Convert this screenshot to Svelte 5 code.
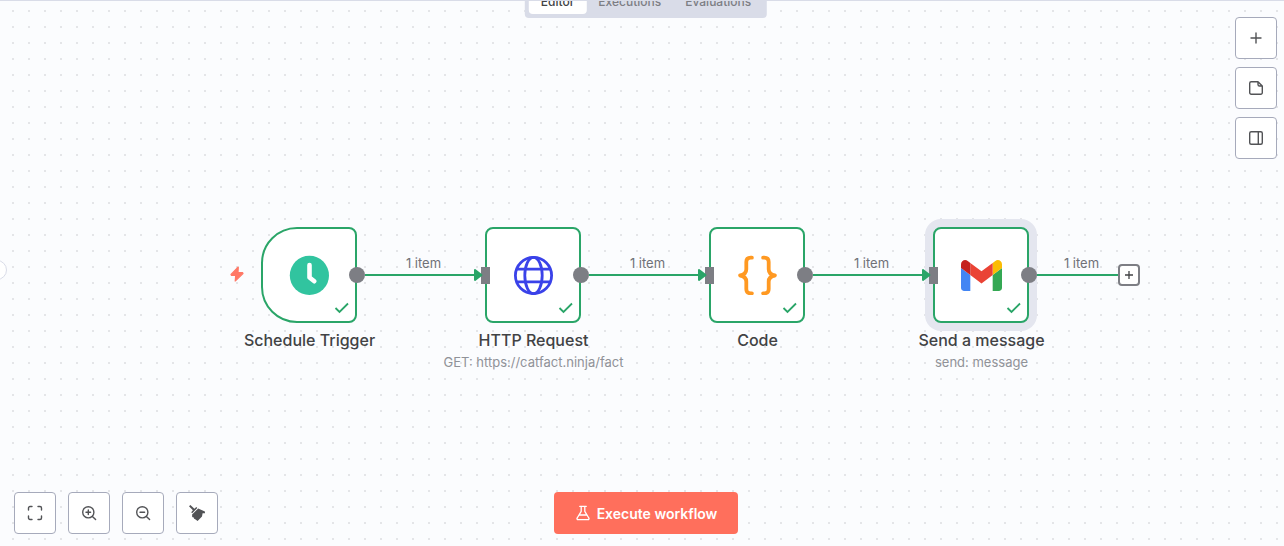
<script>
  const nodes = [
    { id: 'schedule', name: 'Schedule Trigger', x: 261, y: 227, trigger: true },
    { id: 'http', name: 'HTTP Request', sub: 'GET: https://catfact.ninja/fact', x: 485, y: 227 },
    { id: 'code', name: 'Code', x: 709, y: 227 },
    { id: 'gmail', name: 'Send a message', sub: 'send: message', x: 933, y: 227, selected: true }
  ];
  const edges = [
    { x: 365, width: 117, arrow: true },
    { x: 589, width: 117, arrow: true },
    { x: 813, width: 117, arrow: true },
    { x: 1037, width: 89, arrow: false }
  ];
  const tabs = ['Editor', 'Executions', 'Evaluations'];
  let active = $state('Editor');
</script>

<main class="workflow">
  <nav class="tabs" aria-label="Workflow views">
    {#each tabs as tab}
      <button class="tab" class:active={active === tab} onclick={() => (active = tab)}>{tab}</button>
    {/each}
  </nav>

  <button class="panel-toggle" aria-label="Toggle sidebar"></button>

  <section class="canvas" aria-label="Workflow canvas">
    {#each nodes as node}
      <article class="node" style:left="{node.x}px" style:top="{node.y}px">
        <div class="box" class:trigger={node.trigger} class:selected={node.selected}>
          {#if node.id === 'schedule'}
            <svg width="40" height="40" viewBox="0 0 40 40" aria-hidden="true">
              <circle cx="20.400" cy="20.400" r="19.600" fill="#31c49f" />
              <path d="M20.500 10V22.500l4.800 3.700" fill="none" stroke="#fff" stroke-width="4.600" stroke-linecap="round" stroke-linejoin="round" />
            </svg>
          {:else if node.id === 'http'}
            <svg width="40" height="40" viewBox="0 0 40 40" fill="none" stroke="#3a42e9" stroke-width="2.800" aria-hidden="true">
              <g transform="translate(.5 .5)">
                <circle cx="20" cy="20" r="18.100" />
                <ellipse cx="20" cy="20" rx="8.700" ry="18.100" />
                <path d="M2.500 13.600h35M2.500 26.400h35" />
              </g>
            </svg>
          {:else if node.id === 'code'}
            <svg width="40" height="40" viewBox="0 0 40 40" fill="none" stroke="#ff9922" stroke-width="3.800" stroke-linecap="round" stroke-linejoin="round" aria-hidden="true">
              <path transform="translate(.5 .5)" d="M14.400 2.200h-1.200q-4.400 0-4.400 4.400v7.200q0 5.200-6.200 6.200 6.200 1 6.200 6.200v7.200q0 4.400 4.400 4.400h1.200M25.600 2.200h1.200q4.400 0 4.400 4.400v7.200q0 5.200 6.200 6.200-6.200 1-6.200 6.200v7.200q0 4.400-4.400 4.400h-1.200" />
            </svg>
          {:else}
            <svg width="41" height="31" viewBox="52 42 88 66" aria-hidden="true">
              <path fill="#4285f4" d="M58 108h14V74L52 59v43c0 3.320 2.690 6 6 6" />
              <path fill="#34a853" d="M120 108h14c3.320 0 6-2.690 6-6V59l-20 15" />
              <path fill="#fbbc04" d="M120 48v26l20-15v-8c0-7.420-8.470-11.650-14.400-7.200" />
              <path fill="#ea4335" d="M72 74V48l24 18 24-18v26L96 92" />
              <path fill="#c5221f" d="M52 51v8l20 15V48l-5.600-4.200c-5.940-4.450-14.400-.220-14.400 7.200" />
            </svg>
          {/if}
          <svg class="check" viewBox="0 0 16 12" aria-hidden="true">
            <path d="M1.500 6 5.500 10 14 1.500" fill="none" stroke="#2aa568" stroke-width="1.800" />
          </svg>
          {#if node.trigger}
            <svg class="bolt" viewBox="0 0 14 16" aria-hidden="true">
              <path d="M8.300 1 1 8.400l.5 1h4.200L5.200 15 13 7.600l-.5-1H8z" fill="#ff7866" stroke="#ff7866" stroke-width="1.200" stroke-linejoin="round" />
            </svg>
          {:else}
            <span class="handle-in"></span>
          {/if}
          <span class="handle-out"></span>
        </div>
        <h2>{node.name}</h2>
        {#if node.sub}<p>{node.sub}</p>{/if}
      </article>
    {/each}

    {#each edges as edge}
      <div class="edge" style:left="{edge.x}px" style:width="{edge.width}px">
        <span class="edge-label">1 item</span>
        {#if edge.arrow}
          <svg class="arrow" viewBox="0 0 10 14" aria-hidden="true">
            <path d="M2 2 8.500 7 2 12z" fill="#2aa568" stroke="#2aa568" stroke-width="2" stroke-linejoin="round" />
          </svg>
        {/if}
      </div>
    {/each}

    <button class="add-next" aria-label="Add next node">
      <svg width="18" height="18" viewBox="0 0 18 18" aria-hidden="true"><path d="M9 5v8M5 9h8" stroke="#414244" stroke-width="1.300" /></svg>
    </button>
  </section>

  <aside class="side-tools">
    <button class="tool" aria-label="Add node">
      <svg viewBox="0 0 16 16"><path d="M8 3v10M3 8h10" /></svg>
    </button>
    <button class="tool" aria-label="Add sticky note">
      <svg viewBox="0 0 16 16"><path d="M10 1.700H3.200a1.500 1.500 0 0 0-1.500 1.500v9.600a1.500 1.500 0 0 0 1.500 1.500h9.600a1.500 1.500 0 0 0 1.500-1.500V6zM10 1.700V4.500A1.500 1.500 0 0 0 11.500 6h2.800" /></svg>
    </button>
    <button class="tool" aria-label="Open panel">
      <svg viewBox="0 0 16 16"><rect x="1.700" y="1.700" width="12.600" height="12.600" rx="1.500" /><path d="M10.300 1.700v12.600" /></svg>
    </button>
  </aside>

  <footer>
    <div class="zoom-tools">
      <button class="tool" aria-label="Fit to view">
        <svg viewBox="0 0 16 16"><path d="M1.500 5V3A1.500 1.500 0 0 1 3 1.500h2M11 1.500h2A1.500 1.500 0 0 1 14.500 3v2M14.500 11v2a1.500 1.500 0 0 1-1.500 1.500h-2M5 14.500H3A1.500 1.500 0 0 1 1.500 13v-2" /></svg>
      </button>
      <button class="tool" aria-label="Zoom in">
        <svg viewBox="0 0 16 16"><circle cx="7.300" cy="7.300" r="5.600" /><path d="m11.400 11.400 3.200 3.200M7.300 5v4.600M5 7.300h4.600" /></svg>
      </button>
      <button class="tool" aria-label="Zoom out">
        <svg viewBox="0 0 16 16"><circle cx="7.300" cy="7.300" r="5.600" /><path d="m11.400 11.400 3.200 3.200M5 7.300h4.600" /></svg>
      </button>
      <button class="tool" aria-label="Tidy up">
        <svg viewBox="0 0 16 16"><g fill="#525356" stroke="none"><path d="M0 1.200 1.400 0l4 3.700L7.300 2l1 1-5.100 5.300-1-1L3.900 5.300z" /><path d="m9.200 3.500 6.700 3 .1 1.700-2.400.1-.6 3.200L8.600 16l-3.100-2.300-.6.300.2-1.300-1.900-.8-.1-2.500z" /></g></svg>
      </button>
    </div>
    <button class="execute">
      <svg viewBox="0 0 16 16" aria-hidden="true"><path d="M4.700 1.300h6.600M6.200 1.300v5L2.200 13a1 1 0 0 0 .9 1.600h9.800a1 1 0 0 0 .9-1.600l-4-6.700v-5M4.200 10h7.600" fill="none" stroke="#fff" stroke-width="1.300" stroke-linecap="round" stroke-linejoin="round" /></svg>
      Execute workflow
    </button>
  </footer>
</main>

<style>
  :global(body) { margin: 0; }
  .workflow {
    position: relative;
    box-sizing: border-box;
    min-height: 100vh;
    overflow: hidden;
    display: flex;
    flex-direction: column;
    justify-content: space-between;
    border-top: 1px solid #d9dce8;
    background-color: #fbfcfe;
    background-image: conic-gradient(from 270deg at 2px 2px, #e4e5e8 90deg, transparent 0);
    background-position: 12px 9px;
    background-size: 16px 16px;
    font-family: Inter, sans-serif;
    color: #414244;
  }
  button { font-family: inherit; margin: 0; cursor: pointer; }
  .tabs {
    position: absolute;
    z-index: 2;
    top: -19px;
    left: calc(50% + 4px);
    transform: translateX(-50%);
    display: flex;
    padding: 4px;
    border-radius: 4px;
    background: #d9dce8;
  }
  .tab {
    height: 28px;
    padding: 2px 12px 0;
    border: 0;
    border-radius: 4px;
    background: transparent;
    color: #7d7e84;
    font-size: 12px;
    font-weight: 500;
  }
  .tab.active { background: #fff; color: #414244; }
  .panel-toggle {
    position: absolute;
    left: -13px;
    top: 259px;
    width: 20px;
    height: 20px;
    padding: 0;
    border: 1px solid #d9dce8;
    border-radius: 50%;
    background: #fff;
  }
  .canvas { position: absolute; inset: -1px 0 0; }
  .node {
    position: absolute;
    width: 97px;
    display: flex;
    flex-direction: column;
    align-items: flex-start;
  }
  .box {
    position: relative;
    box-sizing: border-box;
    width: 96px;
    height: 96px;
    display: grid;
    place-items: center;
    border: 2px solid #2aa568;
    border-radius: 8px;
    background: #fff;
  }
  .box.trigger { border-radius: 36px 8px 8px 36px; }
  .box.selected { box-shadow: 0 0 0 8px #e4e6ef; }
  .check { position: absolute; right: 5px; bottom: 7px; width: 16px; height: 12px; }
  .bolt { position: absolute; left: -33px; top: 37px; width: 14px; height: 16px; }
  .handle-in { position: absolute; left: -6px; top: 38px; width: 9px; height: 17px; background: #7d7e84; }
  .handle-out { position: absolute; right: -10px; top: 38px; width: 16px; height: 16px; border-radius: 50%; background: #7d7e84; }
  h2, p { align-self: center; white-space: nowrap; }
  h2 { margin: 8px 0 0; font-size: 16px; line-height: 18px; font-weight: 500; }
  p { margin: 5px 0 0; font-size: 13px; line-height: 16px; color: #909298; }
  .edge { position: absolute; top: 262px; height: 12px; border-bottom: 2px solid #2aa568; display: flex; justify-content: center; }
  .edge-label { margin-top: -8px; font-size: 13px; line-height: 18px; color: #6f7177; white-space: nowrap; }
  .arrow { position: absolute; right: -1px; bottom: -8px; width: 10px; height: 14px; }
  .add-next {
    position: absolute;
    left: 1118px;
    top: 264px;
    width: 22px;
    height: 22px;
    display: grid;
    place-items: center;
    padding: 0;
    border: 2px solid #7d7e84;
    border-radius: 4px;
    background: #fff;
  }
  .side-tools {
    position: relative;
    align-self: flex-end;
    display: flex;
    flex-direction: column;
    gap: 8px;
    padding: 16px 7px 0 0;
  }
  .tool {
    box-sizing: border-box;
    width: 42px;
    height: 42px;
    display: grid;
    place-items: center;
    padding: 0;
    border: 1px solid #a6aabb;
    border-radius: 4px;
    background: #fff;
  }
  .tool svg { width: 16px; height: 16px; fill: none; stroke: #525356; stroke-width: 1.4; stroke-linecap: round; stroke-linejoin: round; }
  footer {
    position: relative;
    display: grid;
    grid-template-columns: 1fr auto 1fr;
    align-items: center;
    padding: 0 6px 12px 14px;
  }
  .zoom-tools { display: flex; gap: 12px; }
  .execute {
    height: 42px;
    display: flex;
    align-items: center;
    gap: 6px;
    padding: 0 21px;
    border: 0;
    border-radius: 4px;
    background: #ff6f5c;
    color: #fff;
    font-size: 14px;
    font-weight: 600;
  }
  .execute svg { width: 16px; height: 16px; }
</style>
